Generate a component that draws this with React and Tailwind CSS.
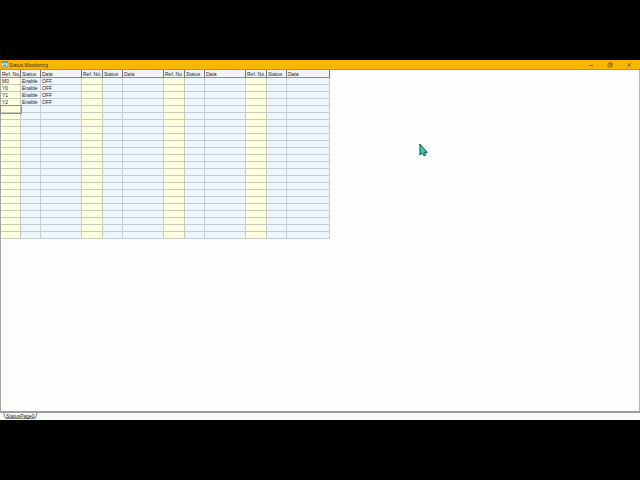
import React, { useState } from "react";

const ROWS = 23;
const GROUPS = [0, 1, 2, 3];

const devices = [
  { ref: "M0", status: "Enable", data: "OFF" },
  { ref: "Y0", status: "Enable", data: "OFF" },
  { ref: "Y1", status: "Enable", data: "OFF" },
  { ref: "Y2", status: "Enable", data: "OFF" },
];

const TitleBar = () => (
  <header className="flex h-[10px] shrink-0 items-center justify-between border-b border-[#c9961a] bg-[#f9b508] text-[#4a3000]">
    <div className="flex items-center gap-px pl-px">
      <svg viewBox="0 0 7 7" className="h-[7px] w-[7px]">
        <rect width="7" height="7" fill="#a9b8ac" />
        <rect y="0.5" width="7" height="1.2" fill="#547f98" />
        <rect x="1" y="2.4" width="5" height="3" fill="#dfeaee" />
        <path d="M2 5V3.2l1 1.2L5 3v2z" fill="#3f7fa8" />
        <rect y="5.8" width="7" height="0.8" fill="#7d9499" />
      </svg>
      <h1 className="text-[5px] leading-[8px]">Status Monitoring</h1>
    </div>
    <div className="flex items-center gap-[13px] pr-2">
      <button aria-label="Minimize" className="h-[6px] w-[6px]">
        <svg viewBox="0 0 6 6" className="h-[6px] w-[6px]">
          <path d="M1 3.5h4" stroke="#704600" strokeWidth="0.8" />
        </svg>
      </button>
      <button aria-label="Restore" className="h-[6px] w-[6px]">
        <svg viewBox="0 0 6 6" className="h-[6px] w-[6px]" fill="none" stroke="#704600" strokeWidth="0.7">
          <rect x="1" y="2" width="3" height="3" rx="0.4" />
          <path d="M2 1.9V1h3v3H4.2" />
        </svg>
      </button>
      <button aria-label="Close" className="h-[6px] w-[6px]">
        <svg viewBox="0 0 6 6" className="h-[6px] w-[6px]">
          <path d="M1 1l4 4M5 1L1 5" stroke="#704600" strokeWidth="0.7" />
        </svg>
      </button>
    </div>
  </header>
);

const MonitorTable = () => {
  const [selected, setSelected] = useState(4);

  return (
    <table className="w-[329px] table-fixed border-separate border-spacing-0 text-left text-[5px] leading-[6px] text-[#202428]">
      <colgroup>
        {GROUPS.map((g) => (
          <React.Fragment key={g}>
            <col className={g === 0 ? "w-[20px]" : "w-[21px]"} />
            <col className="w-[20px]" />
            <col className={g === 3 ? "w-[43px]" : "w-[41px]"} />
          </React.Fragment>
        ))}
      </colgroup>
      <thead>
        <tr className="h-[8px]">
          {GROUPS.map((g) =>
            ["Ref. No.", "Status", "Data"].map((name) => (
              <th
                key={g + name}
                className="h-[8px] overflow-hidden border-r border-b border-r-[#70757a] border-b-[#8a8f92] bg-[#f3f4f1] p-0 pl-px font-normal whitespace-nowrap"
              >
                {name}
              </th>
            ))
          )}
        </tr>
      </thead>
      <tbody>
        {Array.from({ length: ROWS }, (_, row) => (
          <tr key={row} className="h-[7px]">
            {GROUPS.map((g) => {
              const item = g === 0 ? devices[row] : undefined;
              return (
                <React.Fragment key={g}>
                  <td
                    onClick={() => g === 0 && setSelected(row)}
                    className={
                      g === 0 && row === selected
                        ? "h-[7px] border-r border-b border-[#c6cabc] bg-[#feffdf] p-0 pl-px outline outline-[#8d8f80]"
                        : "h-[7px] border-r border-b border-[#c6cabc] bg-[#feffdf] p-0 pl-px"
                    }
                  >
                    {item?.ref}
                  </td>
                  <td className="h-[7px] border-r border-b border-[#c3ced4] bg-[#edf6fc] p-0 pl-px">
                    {item?.status}
                  </td>
                  <td className="h-[7px] border-r border-b border-[#c3ced4] bg-[#edf6fc] p-0 pl-px">
                    {item?.data}
                  </td>
                </React.Fragment>
              );
            })}
          </tr>
        ))}
      </tbody>
    </table>
  );
};

const PageTabs = () => (
  <footer className="flex h-[9px] shrink-0 items-start border-t-2 border-[#999d99] bg-[#f8fbf7] pl-[3px]">
    <button className="relative h-[6px] px-[3px] text-[5px] leading-[6px] text-[#202020]">
      <svg
        viewBox="0 0 32 6"
        preserveAspectRatio="none"
        className="absolute inset-0 h-full w-full"
        fill="none"
        stroke="#555855"
        strokeWidth="0.7"
      >
        <path d="M0.5 0L2.5 5.5H29.5L31.5 0" />
      </svg>
      <span className="relative">StatusPage0</span>
    </button>
  </footer>
);

const Pointer = () => (
  <svg viewBox="0 0 10 14" className="pointer-events-none absolute top-[83px] left-[418px] h-[14px] w-[10px]">
    <path
      d="M1.9 1v11l2.4-2 1.6 2.8 2-1-1.2-2.4H9.2z"
      fill="#28cfa8"
      stroke="#243c3c"
      strokeWidth="0.9"
      strokeLinejoin="round"
    />
  </svg>
);

const App = () => {
  return (
    <div className="flex min-h-screen flex-col bg-black py-[60px] font-['Liberation_Sans',Arial,sans-serif]">
      <div className="relative flex flex-1 flex-col bg-[#fdfffc]">
        <TitleBar />
        <main className="flex-1 border-r border-l border-r-[#b9bbb9] border-l-[#a3a6a3]">
          <MonitorTable />
        </main>
        <PageTabs />
        <Pointer />
      </div>
    </div>
  );
};

export default App;
